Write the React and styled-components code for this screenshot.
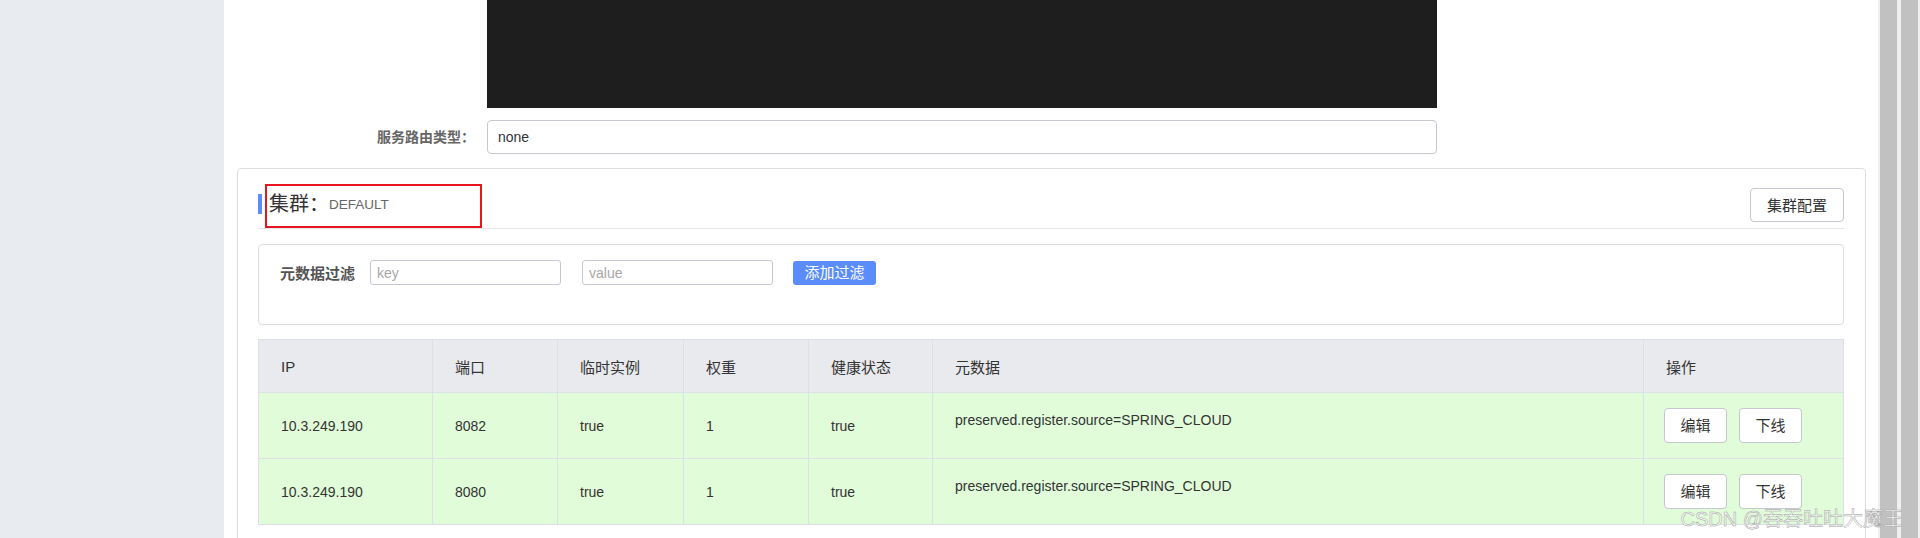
import React from "react";
import styled, { createGlobalStyle } from "styled-components";

const GlobalStyle = createGlobalStyle`
  html, body { margin: 0; padding: 0; background: #fff; }
  body { font-family: "Liberation Sans", "Noto Sans CJK SC", sans-serif; }
  #root { height: 538px; overflow: hidden; }
  * { box-sizing: border-box; }
`;

const Page = styled.div`
  position: relative;
  display: flex;
  height: 538px;
  overflow: hidden;
`;

const Sidebar = styled.aside`
  flex: none;
  width: 224px;
  background: #e8ebf0;
`;

const Main = styled.main`
  flex: 1;
  min-width: 0;
  background: #fff;
  padding: 0 12px 0 13px;
`;

const ScrollArea = styled.div`
  flex: none;
  width: 42px;
  display: flex;
  gap: 4px;
  padding: 0 2px;
  background: #f0f0f0;
`;

const ScrollTrack = styled.div`
  flex: none;
  width: 17px;
  background: #c1c1c1;
`;

const FormGrid = styled.div`
  display: grid;
  grid-template-columns: 250px 950px;
  row-gap: 12px;
`;

const Editor = styled.div`
  grid-column: 2;
  height: 108px;
  background: #1e1e1e;
`;

const FormLabel = styled.label`
  grid-column: 1;
  text-align: right;
  padding-right: 12px;
  font-size: 14px;
  font-weight: bold;
  color: #666;
  line-height: 34px;
`;

const FormInput = styled.div`
  height: 34px;
  border: 1px solid #c5c8ce;
  border-radius: 4px;
  padding: 0 10px;
  font-size: 14px;
  color: #333;
  line-height: 32px;
`;

const Card = styled.section`
  margin-top: 14px;
  border: 1px solid #dcdee2;
  border-radius: 4px;
  padding: 19px 21px 20px 20px;
`;

const TitleRow = styled.div`
  position: relative;
  display: flex;
  align-items: center;
  justify-content: space-between;
  padding-bottom: 6px;
  border-bottom: 1px solid #e5e6eb;
`;

const Title = styled.div`
  display: flex;
  align-items: center;
  height: 20px;
  border-left: 4px solid #5b8cff;
  padding-left: 7px;
  margin-top: -3px;
`;

const TitleMain = styled.span`
  font-size: 20px;
  line-height: 20px;
  color: #333;
`;

const TitleSub = styled.span`
  font-size: 13.5px;
  line-height: 20px;
  color: #666;
  padding-top: 3px;
`;

const RedMark = styled.div`
  position: absolute;
  left: 7px;
  top: -4px;
  width: 217px;
  height: 44px;
  border: 2px solid #e8141f;
  pointer-events: none;
`;

const Button = styled.button`
  height: ${(p) => (p.$small ? "35px" : "34px")};
  width: ${(p) => (p.$small ? "63px" : "auto")};
  padding: ${(p) => (p.$small ? "0" : "0 16px")};
  border: 1px solid #c5c8ce;
  border-radius: 4px;
  background: #fff;
  color: #333;
  font-family: inherit;
  font-size: 15px;
  line-height: 1;
  cursor: pointer;
`;

const FilterBox = styled.div`
  margin-top: 15px;
  height: 81px;
  border: 1px solid #dcdee2;
  border-radius: 4px;
  padding: 15px 21px;
`;

const FilterRow = styled.div`
  display: flex;
  align-items: center;
  height: 25px;
`;

const FilterLabel = styled.span`
  width: 75px;
  margin-right: 15px;
  font-size: 15px;
  font-weight: bold;
  color: #555;
  white-space: nowrap;
`;

const TextInput = styled.input`
  width: 191px;
  height: 25px;
  margin-right: ${(p) => p.$gap}px;
  border: 1px solid #c5c8ce;
  border-radius: 3px;
  padding: 0 6px;
  font-family: inherit;
  font-size: 14px;
  color: #333;
  outline: none;
  &::placeholder { color: #a8a8a8; }
`;

const AddButton = styled.button`
  width: 83px;
  height: 24px;
  border: none;
  border-radius: 3px;
  background: #5a8cfc;
  color: #fff;
  font-family: inherit;
  font-size: 15px;
  line-height: 24px;
  padding: 0;
`;

const Table = styled.table`
  margin-top: 14px;
  width: 1585px;
  border-collapse: collapse;
  table-layout: fixed;
`;

const Col = styled.col`
  width: ${(p) => p.$w}px;
`;

const HeadRow = styled.tr`
  height: 53px;
`;

const BodyRow = styled.tr`
  height: 66px;
`;

const HeadCell = styled.th`
  border: 1px solid #dde0e6;
  background: #e9eaee;
  padding: 0 22px;
  text-align: left;
  font-weight: normal;
  font-size: 15px;
  color: #333;
`;

const Cell = styled.td`
  border: 1px solid #dde0e6;
  background: #e1fcd9;
  padding: ${(p) => (p.$top ? "17px 22px 0" : p.$actions ? "0 20px" : "0 22px")};
  vertical-align: ${(p) => (p.$top ? "top" : "middle")};
  font-size: 14px;
  line-height: 20px;
  color: #333;
  white-space: nowrap;
`;

const Actions = styled.div`
  display: flex;
  gap: 12px;
`;

const Watermark = styled.div`
  position: absolute;
  right: 17px;
  bottom: 8px;
  font-size: 20px;
  line-height: 22px;
  color: rgba(255, 255, 255, 0.9);
  -webkit-text-stroke: 0.5px #a0a0a0;
  pointer-events: none;
  white-space: nowrap;
`;

const columns = [
  ["IP", 174],
  ["端口", 125],
  ["临时实例", 126],
  ["权重", 125],
  ["健康状态", 124],
  ["元数据", 711],
  ["操作", 200],
];

const rows = [
  { ip: "10.3.249.190", port: "8082", eph: "true", weight: "1", healthy: "true" },
  { ip: "10.3.249.190", port: "8080", eph: "true", weight: "1", healthy: "true" },
];

export default function App() {
  return (
    <>
      <GlobalStyle />
      <Page>
        <Sidebar />
        <Main>
          <FormGrid>
            <Editor />
            <FormLabel>服务路由类型：</FormLabel>
            <FormInput>none</FormInput>
          </FormGrid>
          <Card>
            <TitleRow>
              <Title>
                <TitleMain>集群：</TitleMain>
                <TitleSub>DEFAULT</TitleSub>
              </Title>
              <RedMark />
              <Button>集群配置</Button>
            </TitleRow>
            <FilterBox>
              <FilterRow>
                <FilterLabel>元数据过滤</FilterLabel>
                <TextInput placeholder="key" $gap={21} />
                <TextInput placeholder="value" $gap={20} />
                <AddButton>添加过滤</AddButton>
              </FilterRow>
            </FilterBox>
            <Table>
              <colgroup>
                {columns.map(([name, w]) => (
                  <Col key={name} $w={w} />
                ))}
              </colgroup>
              <thead>
                <HeadRow>
                  {columns.map(([name]) => (
                    <HeadCell key={name}>{name}</HeadCell>
                  ))}
                </HeadRow>
              </thead>
              <tbody>
                {rows.map((r) => (
                  <BodyRow key={r.port}>
                    <Cell>{r.ip}</Cell>
                    <Cell>{r.port}</Cell>
                    <Cell>{r.eph}</Cell>
                    <Cell>{r.weight}</Cell>
                    <Cell>{r.healthy}</Cell>
                    <Cell $top>preserved.register.source=SPRING_CLOUD</Cell>
                    <Cell $actions>
                      <Actions>
                        <Button $small>编辑</Button>
                        <Button $small>下线</Button>
                      </Actions>
                    </Cell>
                  </BodyRow>
                ))}
              </tbody>
            </Table>
          </Card>
        </Main>
        <ScrollArea>
          <ScrollTrack />
          <ScrollTrack />
        </ScrollArea>
        <Watermark>CSDN @吞吞吐吐大魔王</Watermark>
      </Page>
    </>
  );
}
